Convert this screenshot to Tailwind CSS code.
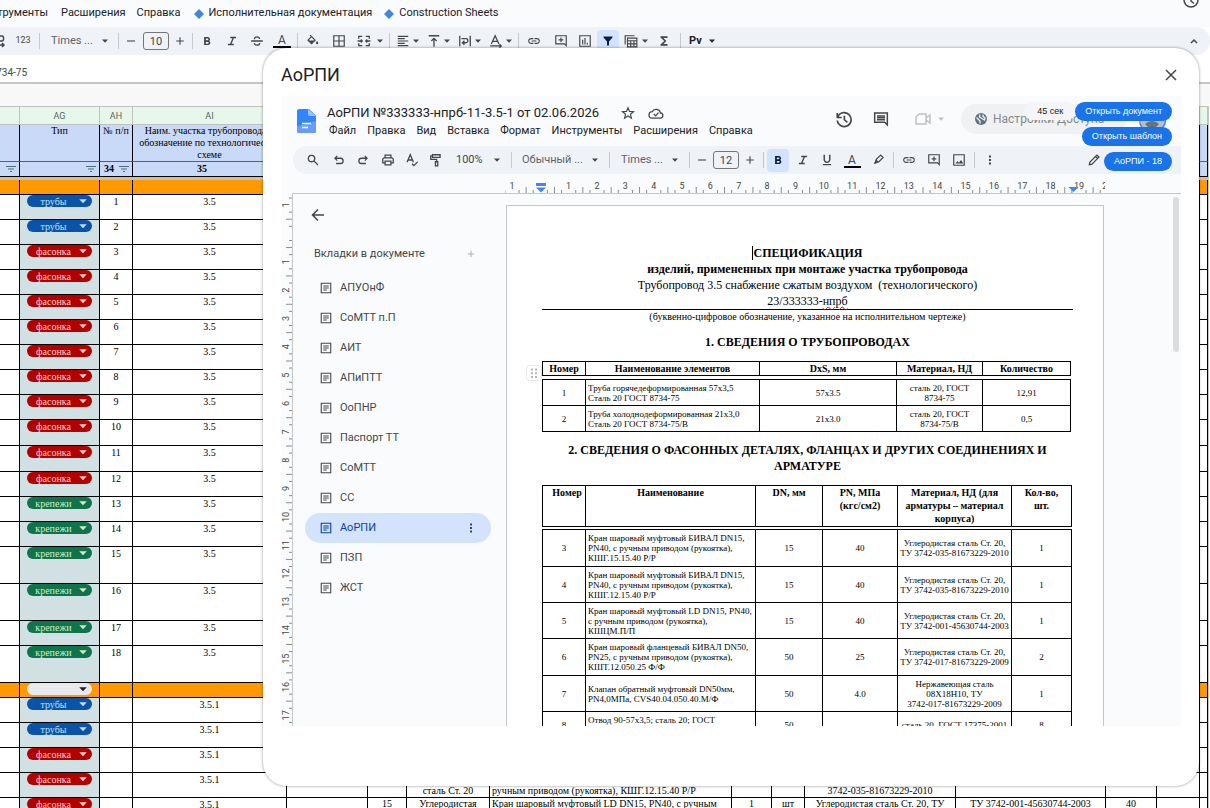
<!DOCTYPE html>
<html lang="ru">
<head>
<meta charset="utf-8">
<title>АоРПИ</title>
<script src="https://cdn.jsdelivr.net/npm/@tailwindcss/browser@4"></script>
</head>
<body class="h-screen overflow-hidden bg-white font-['Roboto',sans-serif] text-[11px] text-[#202124]">
<svg class="hidden">
  <defs>
    <symbol id="caret" viewBox="0 0 8 8"><path d="M1 2.5h6L4 5.8z" fill="currentColor"/></symbol>
    <symbol id="bold" viewBox="0 0 24 24"><path fill="currentColor" d="M15.6 11.79c.97-.67 1.65-1.77 1.65-2.79 0-2.26-1.75-4-4-4H7v14h7.04c2.09 0 3.71-1.7 3.71-3.79 0-1.52-.86-2.82-2.15-3.42zM10 7.500h3c.83 0 1.5.67 1.5 1.5s-.67 1.5-1.5 1.5h-3v-3zm3.5 9H10v-3h3.5c.83 0 1.5.67 1.5 1.5s-.67 1.5-1.5 1.5z"/></symbol>
    <symbol id="italic" viewBox="0 0 24 24"><path fill="none" stroke="currentColor" stroke-width="2.400" d="M9 6h10M5 18h10M14.500 6l-5 12"/></symbol>
    <symbol id="underline" viewBox="0 0 24 24"><path fill="currentColor" d="M12 17c3.310 0 6-2.690 6-6V3h-2.500v8c0 1.930-1.570 3.500-3.500 3.500S8.500 12.930 8.500 11V3H6v8c0 3.310 2.690 6 6 6zm-7 2v2h14v-2H5z"/></symbol>
    <symbol id="strike" viewBox="0 0 24 24"><path fill="none" stroke="currentColor" stroke-width="2.200" d="M2 12h20M16.500 8.500C16 5.500 14 4.800 12 4.800S7.500 6 7.500 8.800M7.300 15.500c.7 3 2.700 3.700 4.700 3.700s4.600-1.200 4.600-3.800"/></symbol>
    <symbol id="link" viewBox="0 0 24 24"><path fill="currentColor" d="M3.900 12c0-1.710 1.390-3.100 3.100-3.100h4V7H7c-2.760 0-5 2.240-5 5s2.240 5 5 5h4v-1.900H7c-1.710 0-3.100-1.390-3.100-3.100zM8 13h8v-2H8v2zm9-6h-4v1.900h4c1.710 0 3.100 1.390 3.100 3.100s-1.390 3.100-3.100 3.100h-4V17h4c2.760 0 5-2.240 5-5s-2.240-5-5-5z"/></symbol>
    <symbol id="addcomment" viewBox="0 0 24 24"><path fill="none" stroke="currentColor" stroke-width="2" d="M3 3h18v17l-3-3H3zM12 6v8M8 10h8"/></symbol>
    <symbol id="comment" viewBox="0 0 24 24"><path fill="none" stroke="currentColor" stroke-width="2.200" d="M2.500 3h19v18l-4-4h-15zM6 7.500h12M6 10.200h12M6 13h12"/></symbol>
    <symbol id="chart" viewBox="0 0 24 24"><path fill="none" stroke="currentColor" stroke-width="2" d="M3 3h18v18H3zM8 10v8M12 7v11M16 15v3"/></symbol>
    <symbol id="image" viewBox="0 0 24 24"><path fill="none" stroke="currentColor" stroke-width="2" d="M3 3h18v18H3z"/><path fill="currentColor" d="M6 18l3.500-4.500 2.500 3 3.500-4.500 4 6z"/></symbol>
    <symbol id="filter" viewBox="0 0 24 24"><path fill="currentColor" d="M3 3h18v2l-7 8v8h-4v-8L3 5z"/></symbol>
    <symbol id="tables" viewBox="0 0 24 24"><path fill="none" stroke="currentColor" stroke-width="2" d="M2 18V3h16M6 7h16v15H6zM6 11.500h16M6 17h16M11.500 11.500V22M17 11.500V22"/></symbol>
    <symbol id="sigma" viewBox="0 0 24 24"><path fill="currentColor" d="M18 4H6v2l6.500 6L6 18v2h12v-3h-7l5-5-5-5h7z"/></symbol>
    <symbol id="borders" viewBox="0 0 24 24"><path fill="none" stroke="currentColor" stroke-width="2" d="M3 3h18v18H3zM12 3v18M3 12h18"/></symbol>
    <symbol id="merge" viewBox="0 0 24 24"><path fill="none" stroke="currentColor" stroke-width="2.200" d="M9 4H3v4M15 4h6v4M9 20H3v-4M15 20h6v-4M1 12h8M23 12h-8M6.500 9.500L9 12l-2.500 2.500M17.500 9.500L15 12l2.500 2.500"/></symbol>
    <symbol id="align" viewBox="0 0 24 24"><path fill="none" stroke="currentColor" stroke-width="2" d="M3 4h18M3 8h12M3 12h18M3 16h12M3 20h18"/></symbol>
    <symbol id="valign" viewBox="0 0 24 24"><path fill="none" stroke="currentColor" stroke-width="2.200" d="M3 3h18M12 22V8M7.500 12L12 7.500l4.500 4.500"/></symbol>
    <symbol id="wrap" viewBox="0 0 24 24"><path fill="none" stroke="currentColor" stroke-width="2.200" d="M3 3v18M21 3v18M6 8h7.500a3.500 3.500 0 0 1 0 7H8M11 11.500L7.500 15l3.500 3.500"/></symbol>
    <symbol id="rotate" viewBox="0 0 24 24"><path fill="none" stroke="currentColor" stroke-width="2.200" d="M4 17L10.500 3 17 17M6.500 12.500h8M2 20.500h19M18 17.500l3 3-3 3"/></symbol>
    <symbol id="fill" viewBox="0 0 24 24"><path fill="none" stroke="currentColor" stroke-width="2.200" d="M7 2l8.500 8.500-6 6L3.500 10.500 9.500 4.500"/><path fill="currentColor" d="M4 11h11l-5.500 5.500zM19 12s-2 2.200-2 3.500a2 2 0 0 0 4 0c0-1.300-2-3.500-2-3.500z"/></symbol>
    <symbol id="search" viewBox="0 0 24 24"><path fill="none" stroke="currentColor" stroke-width="2.200" d="M15 9.500a5.500 5.500 0 1 1-11 0 5.500 5.500 0 0 1 11 0zM13.500 13.500l7 7"/></symbol>
    <symbol id="undo" viewBox="0 0 24 24"><path fill="none" stroke="currentColor" stroke-width="2.200" d="M9 5L5 9l4 4M5 9h9.500a4.500 4.500 0 0 1 0 9H7"/></symbol>
    <symbol id="redo" viewBox="0 0 24 24"><path fill="none" stroke="currentColor" stroke-width="2.200" d="M15 5l4 4-4 4M19 9H9.500a4.500 4.500 0 0 0 0 9H17"/></symbol>
    <symbol id="print" viewBox="0 0 24 24"><path fill="none" stroke="currentColor" stroke-width="2.200" d="M7 8V3.500h10V8M7 17H3V11a2.500 2.500 0 0 1 2.500-2.500h13A2.500 2.500 0 0 1 21 11v6h-4M7 14h10v6.500H7z"/></symbol>
    <symbol id="spell" viewBox="0 0 24 24"><path fill="none" stroke="currentColor" stroke-width="2.200" d="M3.500 16L9 3l5.500 13M5.500 12h7M12 18.500l3.200 3.200 6.500-6.500"/></symbol>
    <symbol id="paint" viewBox="0 0 24 24"><path fill="none" stroke="currentColor" stroke-width="2.200" d="M6 3h13v4.500H6zM6 5H3v6h10v4M11 15h4v7h-4z"/></symbol>
    <symbol id="marker" viewBox="0 0 24 24"><path fill="none" stroke="currentColor" stroke-width="2.200" d="M9 11l7.500-7.500 4.200 4.200L13.200 15.200l-4.200.8-.8-1z"/><path fill="currentColor" d="M9 11l4.200 4.200L8 18.500H4.500z"/></symbol>
    <symbol id="pencil" viewBox="0 0 24 24"><path fill="none" stroke="currentColor" stroke-width="2.200" d="M4 20l1-4.500L17 3.500l3.500 3.500L8.500 19zM14.500 6l3.500 3.500"/></symbol>
    <symbol id="minus" viewBox="0 0 24 24"><path stroke="currentColor" stroke-width="2.200" d="M4 12h16"/></symbol>
    <symbol id="plus" viewBox="0 0 24 24"><path stroke="currentColor" stroke-width="2.200" d="M4.500 12h15M12 4.500v15"/></symbol>
    <symbol id="dots" viewBox="0 0 24 24"><path fill="currentColor" d="M10 3h4v4h-4zM10 10h4v4h-4zM10 17h4v4h-4z"/></symbol>
    <symbol id="doc" viewBox="0 0 24 24"><path fill="none" stroke="currentColor" stroke-width="2.200" d="M2.500 2.500h19v19h-19zM6.500 8h11M6.500 12h11M6.500 16h7"/></symbol>
    <symbol id="diamond" viewBox="0 0 10 10"><path fill="#3f86dc" d="M5 0l5 5-5 5-5-5z"/></symbol>
    <symbol id="sheetfilter" viewBox="0 0 10 8"><path fill="none" stroke="#4b6f78" stroke-width="1.200" d="M0 1.500h10M2 4h6M4 6.500h2"/></symbol>
  </defs>
</svg>

<div class="relative flex h-full w-full flex-col overflow-hidden">
  <!-- spreadsheet -->
  <header class="flex h-[27px] shrink-0 items-center bg-[#f9fbfd]">
    <nav class="flex flex-1 items-center">
      <a href="#" class="flex w-12 justify-end overflow-hidden">Инструменты</a>
      <a href="#" class="ml-[13px]">Расширения</a>
      <a href="#" class="ml-[11px]">Справка</a>
      <a href="#" class="ml-[13px] flex items-center gap-[5px]"><svg class="size-2.5"><use href="#diamond"/></svg>Исполнительная документация</a>
      <a href="#" class="ml-3 flex items-center gap-[5px]"><svg class="size-2.5"><use href="#diamond"/></svg>Construction Sheets</a>
    </nav>
    <button aria-label="История" class="mr-[11px] self-start overflow-hidden text-[#444746]"><svg class="block h-2 w-4" viewBox="0 8 16 8"><path d="M1 8a7 7 0 0 0 14 0M8 6v3l3 2.500" fill="none" stroke="currentColor" stroke-width="1.500"/></svg></button>
  </header>
  <div role="toolbar" class="flex h-7 shrink-0 items-center rounded-r-2xl bg-[#eff3f8] text-[#444746]">
    <button aria-label="Разрядность" class="w-3 overflow-hidden"><svg class="h-4 w-2" viewBox="0 0 8 16"><path d="M0 3h2a1.500 1.500 0 0 1 1.500 1.500v2A1.500 1.500 0 0 1 2 8H0M0 12h4M2 10l2 2-2 2" fill="none" stroke="currentColor" stroke-width="1.500"/></svg></button>
    <button class="w-[22px] text-[9px]">123</button>
    <i class="mx-[5px] h-4 w-px bg-[#c7cacd]"></i>
    <button class="ml-[6px] w-[47px] text-left text-[#5f6368]">Times ...</button>
    <svg class="mx-[3px] size-2"><use href="#caret"/></svg>
    <i class="mx-[6px] h-4 w-px bg-[#c7cacd]"></i>
    <button aria-label="Уменьшить" class="flex w-3 justify-center"><svg class="size-3"><use href="#minus"/></svg></button>
    <input aria-label="Размер шрифта" value="10" class="ml-[6px] h-[18px] w-[26px] rounded-[3px] border border-[#747775] bg-transparent text-center">
    <button aria-label="Увеличить" class="flex w-[22px] justify-center"><svg class="size-3"><use href="#plus"/></svg></button>
    <i class="mx-px h-4 w-px bg-[#c7cacd]"></i>
    <button aria-label="Полужирный" class="flex w-[26px] justify-center"><svg class="size-3.5"><use href="#bold"/></svg></button>
    <button aria-label="Курсив" class="flex w-6 justify-center"><svg class="size-3.5"><use href="#italic"/></svg></button>
    <button aria-label="Зачеркнутый" class="flex w-[26px] justify-center"><svg class="size-3.5"><use href="#strike"/></svg></button>
    <button aria-label="Цвет текста" class="flex w-6 flex-col items-center"><span class="text-[12px] leading-3">A</span><i class="h-0.5 w-[18px] bg-black"></i></button>
    <i class="ml-[3px] mr-0.5 h-4 w-px bg-[#c7cacd]"></i>
    <button aria-label="Заливка" class="flex w-[26px] justify-center"><svg class="size-3.5"><use href="#fill"/></svg></button>
    <button aria-label="Границы" class="flex w-[26px] justify-center"><svg class="size-3.5"><use href="#borders"/></svg></button>
    <button aria-label="Объединить" class="flex w-[24px] justify-center"><svg class="size-3.5"><use href="#merge"/></svg></button>
    <svg class="size-2"><use href="#caret"/></svg>
    <i class="ml-[5px] mr-1 h-4 w-px bg-[#c7cacd]"></i>
    <button aria-label="Выравнивание" class="flex w-[31px] items-center"><svg class="mx-0.5 size-3.5"><use href="#align"/></svg><svg class="size-2"><use href="#caret"/></svg></button>
    <button aria-label="По вертикали" class="flex w-[31px] items-center"><svg class="mx-0.5 size-3.5"><use href="#valign"/></svg><svg class="size-2"><use href="#caret"/></svg></button>
    <button aria-label="Перенос" class="flex w-[31px] items-center"><svg class="mx-0.5 size-3.5"><use href="#wrap"/></svg><svg class="size-2"><use href="#caret"/></svg></button>
    <button aria-label="Поворот" class="flex w-[31px] items-center"><svg class="mx-0.5 size-3.5"><use href="#rotate"/></svg><svg class="size-2"><use href="#caret"/></svg></button>
    <i class="h-4 w-px bg-[#c7cacd]"></i>
    <button aria-label="Ссылка" class="flex w-[30px] justify-center"><svg class="size-3.5"><use href="#link"/></svg></button>
    <button aria-label="Комментарий" class="flex w-6 justify-center"><svg class="size-3.5"><use href="#addcomment"/></svg></button>
    <button aria-label="Диаграмма" class="flex w-[24px] justify-center"><svg class="size-3.5"><use href="#chart"/></svg></button>
    <button aria-label="Фильтр" class="flex size-[22px] items-center justify-center rounded bg-[#d3e3fd] text-[#041e49]"><svg class="size-3"><use href="#filter"/></svg></button>
    <button aria-label="Таблицы" class="ml-[5px] flex items-center"><svg class="size-3.5"><use href="#tables"/></svg><svg class="ml-[3px] size-2"><use href="#caret"/></svg></button>
    <button aria-label="Функции" class="ml-[3px] flex w-6 justify-center"><svg class="size-3.5"><use href="#sigma"/></svg></button>
    <i class="mx-[4px] h-4 w-px bg-[#c7cacd]"></i>
    <button class="flex items-center pl-1 font-bold text-[#202124]">Pv<svg class="ml-1.5 size-2"><use href="#caret"/></svg></button>
    <button aria-label="Скрыть меню" class="ml-auto mr-[11px]"><svg class="h-3 w-2.5" viewBox="0 0 10 12"><path d="M2 8l3-3 3 3" fill="none" stroke="currentColor" stroke-width="1.500"/></svg></button>
  </div>
  <div class="flex h-[29px] shrink-0 items-center border-b-2 border-[#c4c7c5] bg-white pt-2 text-[10px]">
    <span class="flex w-[27px] justify-end overflow-hidden whitespace-nowrap text-[#444746]">ГОСТ 8734-75</span>
  </div>
  <div class="h-[22px] shrink-0 bg-[#f8f8f8]"></div>
  <table class="w-[1209px] shrink-0 table-fixed border-separate border-spacing-0 border-r border-[#c4c7c5] font-['Liberation_Serif',serif] text-[10px] leading-3 text-black">
    <colgroup><col class="w-5"><col class="w-20"><col class="w-[33px]"><col class="w-[154px]"><col class="w-[81px]"><col class="w-[39px]"><col class="w-[83px]"><col class="w-[242px]"><col class="w-[40px]"><col class="w-[33px]"><col class="w-[151px]"><col class="w-[150px]"><col class="w-[51px]"><col class="w-[43px]"><col class="w-2"></colgroup>
    <thead id="sheetHead"></thead>
    <tbody id="sheetBody"></tbody>
  </table>

  <!-- dialog -->
  <section role="dialog" aria-label="АоРПИ" class="absolute bottom-[22px] left-[263px] right-[11px] top-12 flex flex-col rounded-3xl bg-white px-[18px] pb-[60px] shadow-[0_0_3px_rgba(0,0,0,0.45)]">
    <div class="flex h-12 shrink-0 items-center justify-between pt-1.5">
      <h1 class="text-[18px] leading-6">АоРПИ</h1>
      <button aria-label="Закрыть" class="mr-1"><svg class="size-3" viewBox="0 0 12 12"><path d="M1 1l10 10M11 1L1 11" stroke="#444746" stroke-width="1.500"/></svg></button>
    </div>
    <div class="relative flex min-h-0 flex-1 flex-col overflow-hidden bg-[#f9fbfd]">
      <header class="flex h-[50px] shrink-0 items-center pl-4">
        <svg class="h-6 w-[19px]" viewBox="0 0 19 24"><path d="M2 0h10l7 6.500V22a2 2 0 0 1-2 2H2a2 2 0 0 1-2-2V2a2 2 0 0 1 2-2z" fill="#3186ff"/><path d="M0 17l19-5v10a2 2 0 0 1-2 2H2a2 2 0 0 1-2-2z" fill="#6a9bf8"/><path d="M11 0l8 7h-6a2 2 0 0 1-2-2z" fill="#9dc4ff"/><path d="M5 14.500h9M5 18.500h6" stroke="#fff" stroke-width="1.600"/></svg>
        <div class="ml-[11px]">
          <div class="flex items-center leading-5">
            <h2 class="w-[280px] whitespace-nowrap text-[13px] leading-5">АоРПИ №333333-нпрб-11-3.5-1 от 02.06.2026</h2>
            <button aria-label="Пометить" class="ml-3.5"><svg class="size-3.5" viewBox="0 0 24 24"><path d="M12 3l2.600 6.300 6.900.5-5.300 4.400 1.700 6.700L12 17.200l-5.900 3.700 1.700-6.700-5.300-4.400 6.900-.5z" fill="none" stroke="#444746" stroke-width="2"/></svg></button>
            <button aria-label="Сохранено" class="ml-[13px]"><svg class="h-3.5 w-4" viewBox="0 0 24 22"><path d="M6 19h12.500a4 4 0 0 0 .5-8A7 7 0 0 0 6 9a5 5 0 0 0 0 10zM8.500 12.500l3 3 4.500-5" fill="none" stroke="#444746" stroke-width="2"/></svg></button>
          </div>
          <nav class="flex gap-[11px] pl-0.5 leading-4">
            <a href="#">Файл</a><a href="#">Правка</a><a href="#">Вид</a><a href="#">Вставка</a><a href="#">Формат</a><a href="#">Инструменты</a><a href="#">Расширения</a><a href="#">Справка</a>
          </nav>
        </div>
        <div class="ml-auto mr-3.5 flex items-center pb-1 text-[#444746]">
          <button aria-label="История версий"><svg class="size-[18px]" viewBox="0 0 24 24"><path d="M3 4v6h6M3.500 9.500A9.300 9.300 0 1 1 3 14M12.500 7.500V13l4 3.500" fill="none" stroke="currentColor" stroke-width="2.200"/></svg></button>
          <button aria-label="Комментарии" class="ml-5"><svg class="size-4"><use href="#comment"/></svg></button>
          <button aria-label="Видеовстреча" class="ml-[26px] flex items-center text-[#bfc2c5]"><svg class="h-3.5 w-4" viewBox="0 0 16 14"><path d="M4 2h7v10H1V5zM11 6l4-3v8l-4-3" fill="none" stroke="currentColor" stroke-width="1.500"/></svg><svg class="ml-1.5 size-2"><use href="#caret"/></svg></button>
          <button class="ml-4 flex h-[30px] w-[165px] items-center rounded-full bg-[#f0f1f3] pl-3.5 text-[12px] text-[#85898d]"><svg class="mr-1.5 size-3" viewBox="0 0 12 12"><circle cx="6" cy="6" r="6" fill="#5e7380"/><path d="M1.500 4.500L5 8v2.500M5 1.500L4.500 4 7 5.500 9.500 7l.5-2L8 3.500V1.500" fill="none" stroke="#f0f1f3" stroke-width="1.300"/></svg>Настройки Доступа</button>
          <svg class="ml-3 size-[29px]" viewBox="0 0 29 29"><circle cx="14.500" cy="14.500" r="13" fill="#b9c0c6" stroke="#4285f4" stroke-width="1.500"/><path d="M2 18a13 13 0 0 1 1-10" stroke="#f2b600" stroke-width="1.500" fill="none"/><path d="M7 19q7-6 14 0l-3 3h-8z" fill="#67717a"/></svg>
        </div>
      </header>
      <div role="toolbar" class="ml-3 flex h-7 shrink-0 items-center rounded-l-full bg-[#eff3f8] pl-[7px] text-[#444746]">
        <button aria-label="Поиск" class="flex w-[26px] justify-center"><svg class="size-3.5"><use href="#search"/></svg></button>
        <button aria-label="Отменить" class="flex w-[25px] justify-center"><svg class="size-3.5"><use href="#undo"/></svg></button>
        <button aria-label="Повторить" class="flex w-6 justify-center"><svg class="size-3.5"><use href="#redo"/></svg></button>
        <button aria-label="Печать" class="flex w-[25px] justify-center"><svg class="size-3.5"><use href="#print"/></svg></button>
        <button aria-label="Правописание" class="flex w-6 justify-center"><svg class="size-3.5"><use href="#spell"/></svg></button>
        <button aria-label="Формат" class="flex w-6 justify-center"><svg class="size-3.5"><use href="#paint"/></svg></button>
        <button class="w-[41px] pl-2 text-left">100%</button>
        <svg class="mx-1 size-2"><use href="#caret"/></svg>
        <i class="mx-[6px] h-4 w-px bg-[#c7cacd]"></i>
        <button class="w-[73px] whitespace-nowrap pl-1 text-left text-[#5f6368]">Обычный ...</button>
        <svg class="size-2"><use href="#caret"/></svg>
        <i class="mx-2.5 h-4 w-px bg-[#c7cacd]"></i>
        <button class="w-[51px] pl-px text-left text-[#5f6368]">Times ...</button>
        <svg class="size-2"><use href="#caret"/></svg>
        <i class="ml-[10px] mr-1.5 h-4 w-px bg-[#c7cacd]"></i>
        <button aria-label="Уменьшить" class="flex w-3 justify-center"><svg class="size-3"><use href="#minus"/></svg></button>
        <input aria-label="Размер шрифта" value="12" class="ml-[5px] h-[18px] w-[26px] rounded-[3px] border border-[#747775] bg-transparent text-center">
        <button aria-label="Увеличить" class="flex w-[22px] justify-center"><svg class="size-3"><use href="#plus"/></svg></button>
        <i class="mx-0.5 h-4 w-px bg-[#c7cacd]"></i>
        <button aria-label="Полужирный" class="ml-px flex h-[23px] w-[22px] items-center justify-center rounded bg-[#d3e3fd] text-[#041e49]"><svg class="size-3.5"><use href="#bold"/></svg></button>
        <button aria-label="Курсив" class="ml-0.5 flex w-6 justify-center"><svg class="size-3.5"><use href="#italic"/></svg></button>
        <button aria-label="Подчеркнутый" class="flex w-6 justify-center"><svg class="size-3.5"><use href="#underline"/></svg></button>
        <button aria-label="Цвет текста" class="flex w-[26px] flex-col items-center pt-0.5"><span class="text-[12px] leading-3">A</span><i class="h-0.5 w-[17px] bg-black"></i></button>
        <button aria-label="Маркер" class="flex w-[26px] justify-center"><svg class="size-3.5"><use href="#marker"/></svg></button>
        <i class="mx-[2px] h-4 w-px bg-[#c7cacd]"></i>
        <button aria-label="Ссылка" class="flex w-[26px] justify-center"><svg class="size-3.5"><use href="#link"/></svg></button>
        <button aria-label="Комментарий" class="flex w-6 justify-center"><svg class="size-3.5"><use href="#addcomment"/></svg></button>
        <button aria-label="Изображение" class="flex w-[26px] justify-center"><svg class="size-3.5"><use href="#image"/></svg></button>
        <i class="mx-[2px] h-4 w-px bg-[#c7cacd]"></i>
        <button aria-label="Ещё" class="flex w-[26px] justify-center"><svg class="size-3"><use href="#dots"/></svg></button>
        <button aria-label="Режим" class="ml-auto mr-20"><svg class="block size-3.5"><use href="#pencil"/></svg></button>
      </div>
      <svg id="rulerX" class="ml-[224px] block h-[19px] w-[600px] shrink-0 overflow-hidden text-[9px]" fill="#444746"></svg>
      <div class="flex min-h-0 flex-1">
        <svg id="rulerY" class="block h-full w-[11px] shrink-0 overflow-hidden text-[9px]" fill="#444746"></svg>
        <div class="flex min-w-0 flex-1 border-l border-t border-[#c4c7c5]">
          <aside class="w-[213px] shrink-0 text-[#444746]">
            <button aria-label="Назад" class="ml-[18px] mt-[14px] block"><svg class="size-3.5" viewBox="0 0 14 14"><path d="M13 7H2M7 1.500L1.500 7 7 12.500" fill="none" stroke="currentColor" stroke-width="1.600"/></svg></button>
            <div class="mt-6 flex h-4 items-center justify-between pl-[21px] pr-[30px]">
              <span>Вкладки в документе</span>
              <button aria-label="Добавить" class="text-[#a9acaf]"><svg class="size-2.5"><use href="#plus"/></svg></button>
            </div>
            <nav id="tabs" class="mt-[11px] pl-3 pr-[15px]"></nav>
          </aside>
          <main class="relative mt-[11px] w-[598px] shrink-0 overflow-hidden border border-b-0 border-[#c4c7c5] bg-white pl-[35px] pr-[30px] pt-[39px] font-['Liberation_Serif',serif] text-[12px] leading-4 text-black">
            <p class="text-center font-bold"><span class="border-l border-black">СПЕЦИФИКАЦИЯ</span></p>
            <p class="text-center font-bold">изделий, примененных при монтаже участка трубопровода</p>
            <p class="whitespace-pre text-center">Трубопровод 3.5 снабжение сжатым воздухом  (технологического)</p>
            <p class="border-b border-black text-center">23/333333-<span class="underline decoration-red-600 decoration-wavy decoration-1">нпрб</span></p>
            <p class="text-center text-[10px] leading-[14px]">(буквенно-цифровое обозначение, указанное на исполнительном чертеже)</p>
            <h3 class="mt-2.5 text-center font-bold">1. СВЕДЕНИЯ О ТРУБОПРОВОДАХ</h3>
            <div class="relative mt-[11px]">
              <svg class="absolute -left-4 top-1 h-4 w-4" viewBox="0 0 16 16"><rect x=".5" y=".5" width="15" height="15" rx="3" fill="#fff" stroke="#e4e6e8"/><path d="M5 3.500h2v2H5zM9 3.500h2v2H9zM5 7.200h2v2H5zM9 7.200h2v2H9zM5 11h2v2H5zM9 11h2v2H9z" fill="#b4b7ba"/></svg>
              <table class="w-[529px] table-fixed border-collapse text-center text-[9px] leading-[10px]">
                <colgroup><col class="w-[43px]"><col class="w-[174px]"><col class="w-[137px]"><col class="w-[86px]"><col class="w-[88px]"></colgroup>
                <thead class="text-[10px]"><tr class="h-[14px]"><th class="border border-black">Номер</th><th class="border border-black">Наименование элементов</th><th class="border border-black">DxS, мм</th><th class="border border-black">Материал, НД</th><th class="border border-black">Количество</th></tr></thead>
                <tbody id="pipes"><tr class="h-1"><td colspan="5" class="p-0"></td></tr></tbody>
              </table>
            </div>
            <h3 class="mt-2.5 text-center font-bold">2. СВЕДЕНИЯ О ФАСОННЫХ ДЕТАЛЯХ, ФЛАНЦАХ И ДРУГИХ СОЕДИНЕНИЯХ И АРМАТУРЕ</h3>
            <table class="mt-[11px] w-[530px] table-fixed border-collapse text-center text-[9px] leading-[10px]">
              <colgroup><col class="w-[43px]"><col class="w-[170px]"><col class="w-[67px]"><col class="w-[75px]"><col class="w-[114px]"><col class="w-[60px]"></colgroup>
              <thead class="text-[10px] leading-[13px]"><tr class="h-[41px] align-top"><th class="border border-black pl-1.5">Номер</th><th class="border border-black">Наименование</th><th class="border border-black">DN, мм</th><th class="border border-black">PN, МПа<br>(кгс/см2)</th><th class="border border-black">Материал, НД (для<br>арматуры – материал<br>корпуса)</th><th class="border border-black">Кол-во,<br>шт.</th></tr></thead>
              <tbody id="fittings"><tr class="h-[3px]"><td colspan="6" class="p-0"></td></tr></tbody>
            </table>
          </main>
          <div class="flex flex-1 justify-end pr-0.5 pt-[3px]"><div class="h-[155px] w-1.5 rounded-full bg-[#dadce0]"></div></div>
        </div>
      </div>
      <!-- floating actions over the document header -->
      <div class="absolute right-[9px] top-1.5 flex flex-col items-end gap-1.5 font-['Liberation_Sans',sans-serif] text-[9px] leading-[19px] text-white">
        <div class="flex items-start">
          <span class="rounded-lg bg-[#f4f5f7] px-3 leading-[18px] text-[#202124]">45 сек</span>
          <button class="h-[19px] rounded-full bg-[#1a73e8] px-2.5">Открыть документ</button>
        </div>
        <button class="h-[19px] rounded-full bg-[#1a73e8] px-2.5">Открыть шаблон</button>
        <button class="h-[19px] rounded-full bg-[#1a73e8] px-2.5">АоРПИ - 18</button>
      </div>
    </div>
  </section>
</div>

<script>
const byId = id => document.getElementById(id);

// sheet header
const mark = '<svg class="ml-auto mr-[3px] h-2 w-2.5"><use href="#sheetfilter"/></svg>';
const fill = (n, html) => Array(n).fill(html).join('');
const letter = t => `<th class="border-b border-r border-t border-[#c0c0c0] bg-[#e6f8ea] p-0 font-['Roboto',sans-serif] text-[9px] font-normal text-[#5f6368]">${t}</th>`;
const title = t => `<th class="overflow-hidden whitespace-nowrap border-b border-r border-b-[#2f7d4f] border-r-black bg-[#c9daf8] p-0 align-top font-normal">${t}</th>`;
const num = t => `<th class="border-b border-r border-black bg-[#c9daf8] p-0"><div class="flex items-center">${t}</div></th>`;
byId('sheetHead').innerHTML =
  `<tr class="h-[19px]">${letter('')}${letter('AG')}${letter('AH')}${letter('AI')}${fill(11, letter(''))}</tr>` +
  `<tr class="h-[37px]">${title('')}${title('Тип')}${title('№ п/п')}${title('Наим. участка трубопровода и<br>обозначение по технологической<br>схеме')}${fill(11, title(''))}</tr>` +
  `<tr class="h-[15px]">${num(mark)}${num(mark)}${num('<span class="ml-1">34</span>' + mark)}${num('<span class="ml-16">35</span>')}${fill(11, num(''))}</tr>` +
  `<tr class="h-[3px]"><td colspan="15" class="bg-[#c0c0c0] p-0"></td></tr>`;

// sheet rows: [height, chip, number, section]
const chips = {
  'трубы': 'bg-[#0a53a8] text-[#bfe1f6]',
  'фасонка': 'bg-[#b10202] text-[#ffcfc9]',
  'крепежи': 'bg-[#11734b] text-[#d4edbc]',
  '': 'bg-[#e8eaed] text-[#202124]'
};
const chip = t => `<div class="relative mx-[5px] h-3 rounded-full ${chips[t]}"><select aria-label="Тип" class="block h-3 w-full appearance-none bg-transparent pr-3 pt-px text-center text-[10px] leading-[11px]"><option>${t}</option></select><svg class="pointer-events-none absolute right-1 top-0 h-3 w-2.5"><use href="#caret"/></svg></div>`;
const heights = [25,25,25,25,25,25,25,25,25,26,26,25,25,25,37,37,25,37];
const rows = [[15, null, '', '']];
heights.forEach((h, i) => rows.push([h, i < 2 ? 'трубы' : i < 12 ? 'фасонка' : 'крепежи', i + 1, '3.5']));
rows.push([15, '', '', '']);
['трубы', 'трубы', 'фасонка', 'фасонка', 'фасонка'].forEach(t => rows.push([25, t, '', '3.5.1']));
const more = {
  23: ['', '', 'Углеродистая сталь Ст. 20', 'Кран шаровый муфтовый БИВАЛ DN15, PN40, с ручным приводом (рукоятка), КШГ.12.15.40 Р/Р', '', '', 'Углеродистая сталь Ст. 20, ТУ 3742-035-81673229-2010', '', '', '', ''],
  24: ['', '15', 'Углеродистая сталь Ст. 20', 'Кран шаровый муфтовый LD DN15, PN40, с ручным приводом (рукоятка), КШЦМ.П/П', '1', 'шт', 'Углеродистая сталь Ст. 20, ТУ 3742-001-45630744-2003', 'ТУ 3742-001-45630744-2003', '40', '', '']
};
byId('sheetBody').innerHTML = rows.map(([h, c, n, s], i) => {
  const orange = h === 15;
  const bg = orange ? 'bg-[#ff9900]' : 'bg-white';
  const td = (t, extra) => `<td class="border-b border-r border-black ${extra} px-0.5 py-0 text-center align-top">${t}</td>`;
  const rest = more[i] || Array(11).fill('');
  return `<tr style="height:${h}px">` + td('', bg) + td(c === null ? '' : chip(c), orange ? bg : 'bg-[#d0e0e3]') +
    td(n, bg + ' pt-px') + td(s, bg + ' pt-px') +
    rest.map((t, k) => k === 3 ? `<td class="border-b border-r border-black ${bg} px-0.5 py-0 text-left align-top">${t}</td>` : td(t, bg)).join('') + '</tr>';
}).join('');

// document tabs
byId('tabs').innerHTML = ['АПУОнФ', 'СоМТТ п.П', 'АИТ', 'АПиПТТ', 'ОоПНР', 'Паспорт ТТ', 'СоМТТ', 'СС', 'АоРПИ', 'ПЗП', 'ЖСТ'].map(t => {
  const on = t === 'АоРПИ';
  return `<a href="#" class="flex h-[30px] items-center rounded-full pl-[15px] pr-3.5 ${on ? 'bg-[#d3e3fd] text-[#0842a0]' : ''}"><svg class="mr-2 size-3"><use href="#doc"/></svg>${t}${on ? '<svg class="ml-auto size-3 text-[#444746]"><use href="#dots"/></svg>' : ''}</a>`;
}).join('');

// rulers, one unit is a centimetre
const unit = 28.35;
let x = '', y = '';
for (let q = -5; q <= 80; q++) {
  const p = 35.3 + q * unit / 4, v = 40.4 + q * unit / 4;
  if (q % 4) {
    const len = q % 2 ? 3 : 6;
    x += `<path d="M${p} 19v-${len}" stroke="#8a8d90"/>`;
    y += `<path d="M11 ${v}h-${len}" stroke="#8a8d90"/>`;
  } else if (q) {
    const n = Math.abs(q / 4);
    x += `<text x="${p}" y="15" text-anchor="middle">${n}</text>`;
    y += `<text transform="translate(8 ${v}) rotate(-90)" text-anchor="middle">${n}</text>`;
  }
}
byId('rulerX').innerHTML = x + '<path d="M31 9h10v3h-10zM31 13.500h10l-5 5zM563.500 13h10l-5 5z" fill="#4285f4"/>';
byId('rulerY').innerHTML = y;

// document tables
const line = (cells, h) => `<tr style="height:${h}px">` + cells.map((t, i) =>
  `<td class="border border-black ${i === 1 ? 'px-0.5 text-left' : 'px-0'} py-0">${t}</td>`).join('') + '</tr>';
byId('pipes').insertAdjacentHTML('beforeend', [
  ['1', 'Труба горячедеформированная 57х3,5<br>Сталь 20 ГОСТ 8734-75', '57x3.5', 'сталь 20, ГОСТ<br>8734-75', '12,91'],
  ['2', 'Труба холоднодеформированная 21х3,0<br>Сталь 20 ГОСТ 8734-75/В', '21x3.0', 'сталь 20, ГОСТ<br>8734-75/В', '0,5']
].map(r => line(r, 26)).join(''));
byId('fittings').insertAdjacentHTML('beforeend', [
  ['3', 'Кран шаровый муфтовый БИВАЛ DN15,<br>PN40, с ручным приводом (рукоятка),<br>КШГ.15.15.40 Р/Р', '15', '40', 'Углеродистая сталь Ст. 20,<br>ТУ 3742-035-81673229-2010', '1'],
  ['4', 'Кран шаровый муфтовый БИВАЛ DN15,<br>PN40, с ручным приводом (рукоятка),<br>КШГ.12.15.40 Р/Р', '15', '40', 'Углеродистая сталь Ст. 20,<br>ТУ 3742-035-81673229-2010', '1'],
  ['5', 'Кран шаровый муфтовый LD DN15, PN40,<br>с ручным приводом (рукоятка),<br>КШЦМ.П/П', '15', '40', 'Углеродистая сталь Ст. 20,<br>ТУ 3742-001-45630744-2003', '1'],
  ['6', 'Кран шаровый фланцевый БИВАЛ DN50,<br>PN25, с ручным приводом (рукоятка),<br>КШТ.12.050.25 Ф/Ф', '50', '25', 'Углеродистая сталь Ст. 20,<br>ТУ 3742-017-81673229-2009', '2'],
  ['7', 'Клапан обратный муфтовый DN50мм,<br>PN4,0МПа, CVS40.04.050.40.М/Ф', '50', '4.0', 'Нержавеющая сталь<br>08Х18Н10, ТУ<br>3742-017-81673229-2009', '1'],
  ['8', 'Отвод 90-57х3,5; сталь 20; ГОСТ<br>17375-2001', '50', '', 'сталь 20, ГОСТ 17375-2001', '8']
].map((r, i) => line(r, i === 0 || i === 3 ? 37 : i === 5 ? 26 : 36)).join(''));
</script>
</body>
</html>
